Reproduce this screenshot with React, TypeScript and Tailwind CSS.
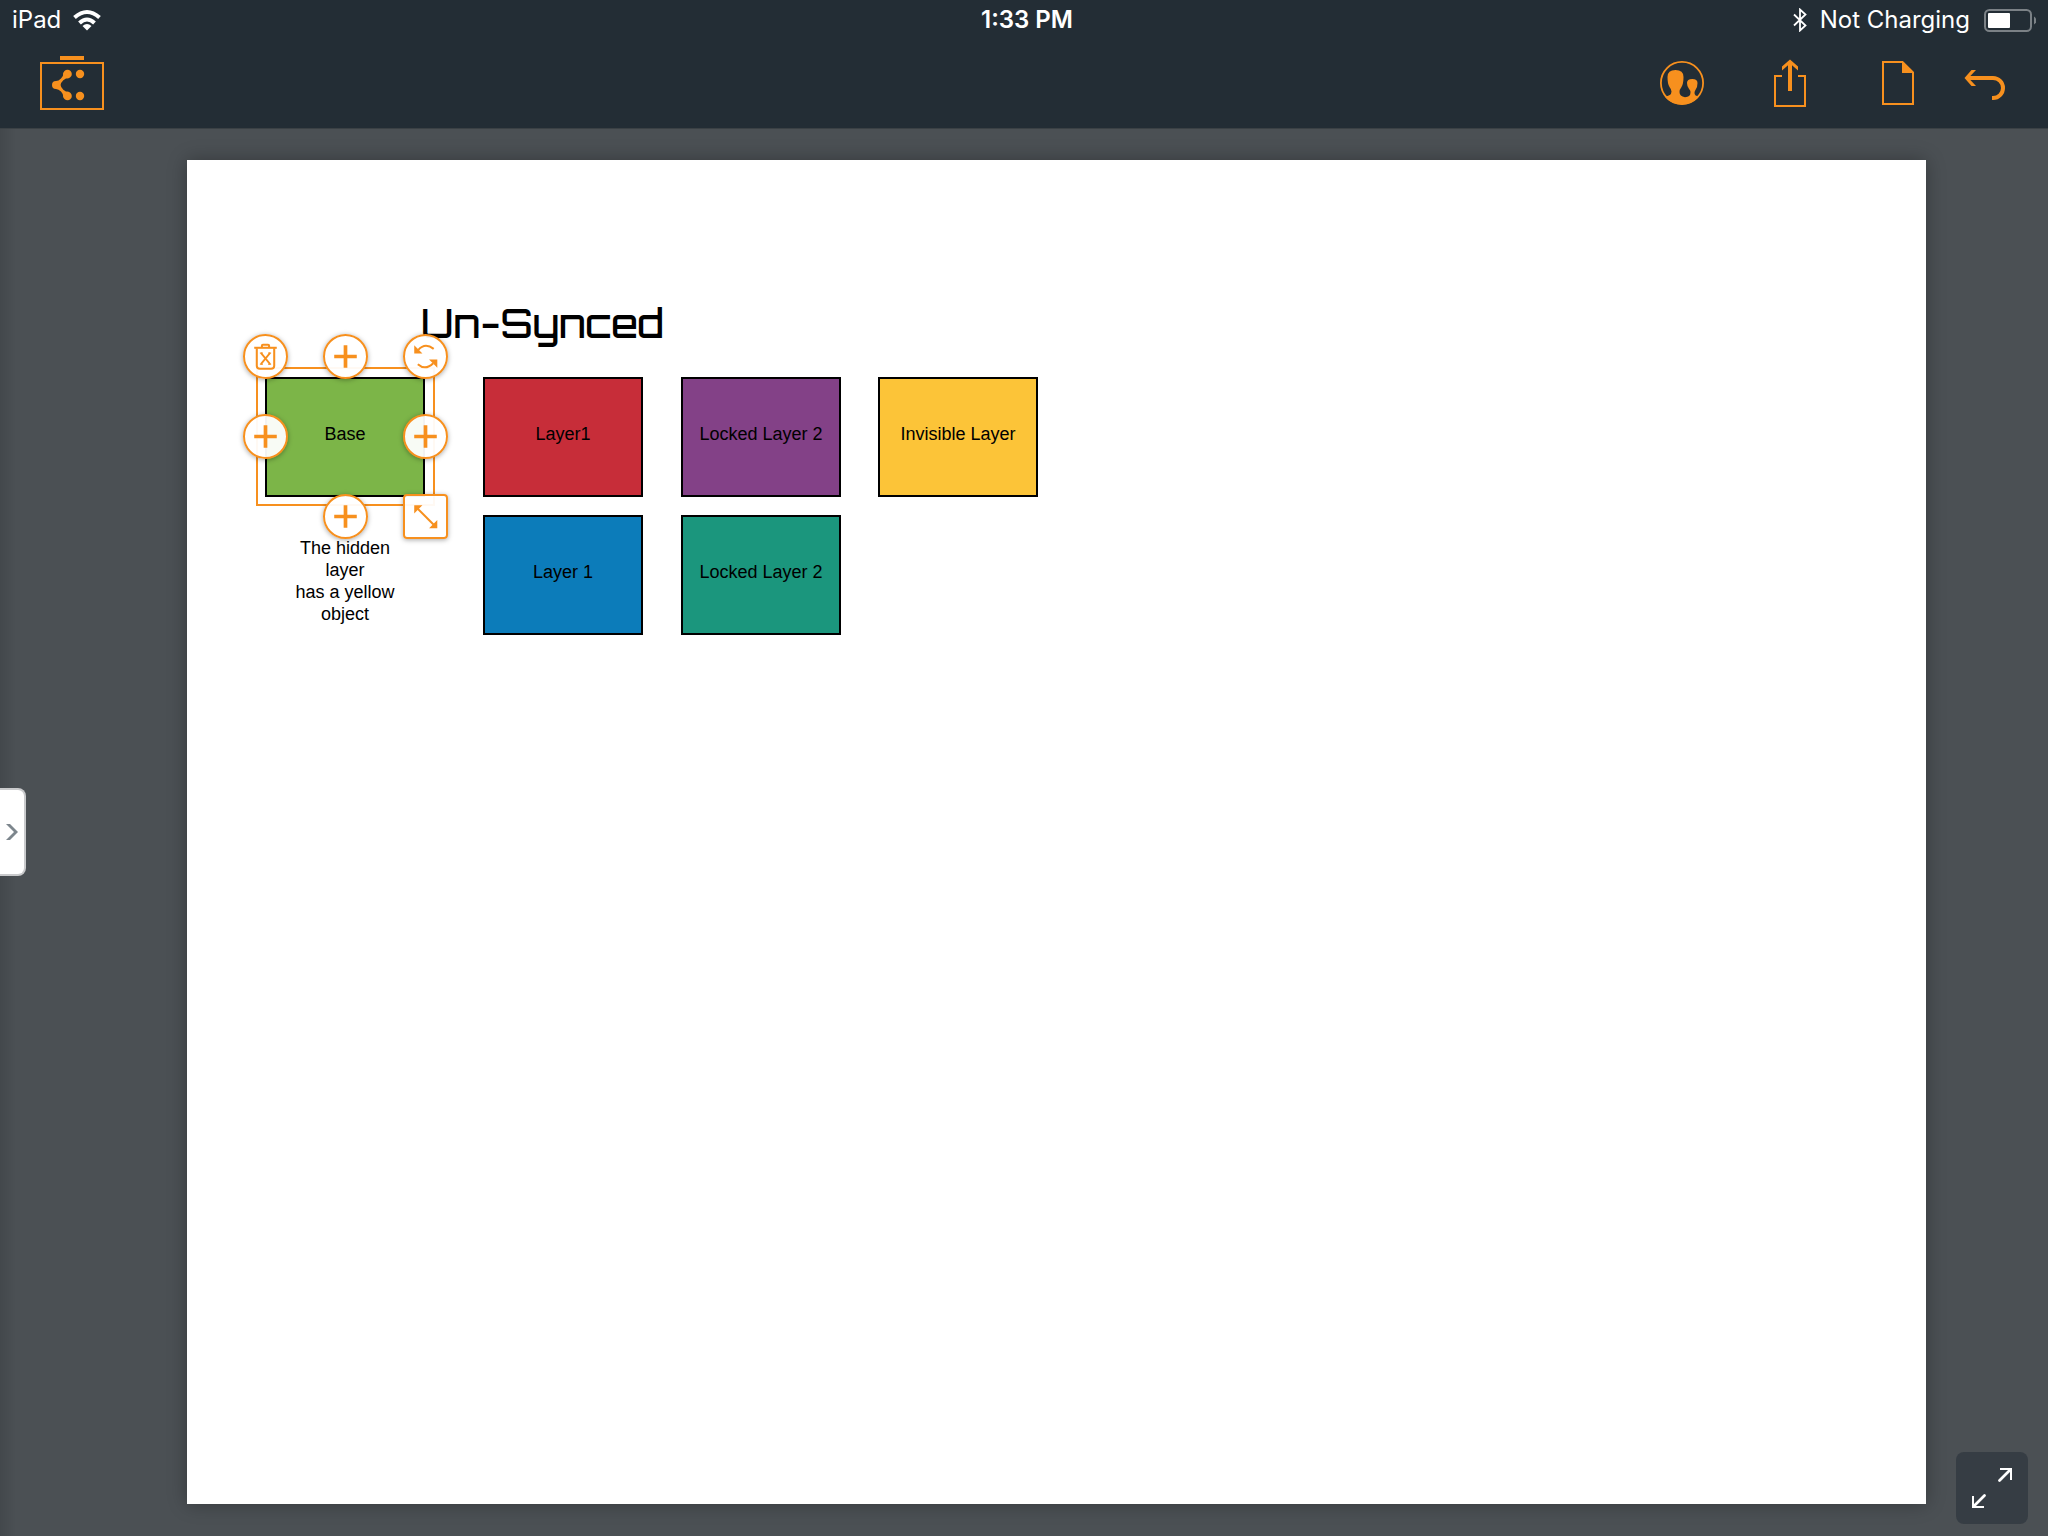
import type { ReactNode } from "react";

const shapes = [
  { label: "Base", place: "left-[78px] top-[217px] bg-[#7cb548]" },
  { label: "Layer1", place: "left-[296px] top-[217px] bg-[#c72d39]" },
  { label: "Locked Layer 2", place: "left-[494px] top-[217px] bg-[#834187]" },
  { label: "Invisible Layer", place: "left-[691px] top-[217px] bg-[#fcc438]" },
  { label: "Layer 1", place: "left-[296px] top-[355px] bg-[#0c7cba]" },
  { label: "Locked Layer 2", place: "left-[494px] top-[355px] bg-[#1b967d]" },
];

function Plus() {
  return (
    <svg className="size-full" viewBox="0 0 40 40" fill="#f7901e" aria-hidden="true">
      <path d="M18.200 9h3.600v9.200H31v3.600h-9.200V31h-3.600v-9.200H9v-3.600h9.200z" />
    </svg>
  );
}

function Trash() {
  return (
    <svg className="size-full" viewBox="0 0 40 40" fill="none" stroke="#f7901e" strokeWidth="2" aria-hidden="true">
      <path d="M9 11.500h22" />
      <path d="M16.500 11V9.500q0-1 1-1h5q1 0 1 1V11" />
      <path d="M11.500 12v17q0 3 3 3h11q3 0 3-3V12" />
      <path d="M15.500 16.500l9 11M24.500 16.500l-9 11" strokeWidth="1.800" />
      <path d="M14.500 16.500h3M22.500 16.500h3M14.500 27.500h3M22.500 27.500h3" strokeWidth="1" />
    </svg>
  );
}

function Rotate() {
  return (
    <svg className="size-full" viewBox="0 0 40 40" fill="none" aria-hidden="true">
      <path d="M13 13.500Q19.500 6 28 12.500" stroke="#f7901e" strokeWidth="2" />
      <path d="M12.500 27.500Q20 34 27.500 26.500" stroke="#f7901e" strokeWidth="2" />
      <path d="M9 9v8h8z" fill="#f7901e" />
      <path d="M31.500 31v-8h-8z" fill="#f7901e" />
    </svg>
  );
}

function Resize() {
  return (
    <svg className="size-full" viewBox="0 0 40 40" aria-hidden="true">
      <path d="M12 12l17 17" stroke="#f7901e" strokeWidth="2" />
      <path d="M9 9h8l-8 8zM31.500 31.500h-8l8-8z" fill="#f7901e" />
    </svg>
  );
}

function Handle({ label, place, children }: { label: string; place: string; children: ReactNode }) {
  return (
    <button
      type="button"
      aria-label={label}
      className={`absolute size-[45px] border-2 border-[#f7901e] bg-white/95 shadow-[0_1px_5px_rgba(0,0,0,0.35)] ${place}`}
    >
      {children}
    </button>
  );
}

function StatusBar() {
  return (
    <div className="grid h-10 grid-cols-3 items-center px-3 text-2xl leading-10 text-white">
      <div className="flex items-center gap-3">
        <span>iPad</span>
        <svg className="h-6 w-7" viewBox="0 0 28 24" fill="none" stroke="white" strokeWidth="4" aria-label="Wi-Fi">
          <path d="M1.500 9.500Q14-1.500 26.500 9.500" />
          <path d="M6.500 15Q14 8 21.500 15" />
          <path d="M9.500 18q4.500-4 9 0L14 22.500z" fill="white" stroke="none" />
        </svg>
      </div>
      <time className="justify-self-center pl-1.5 font-semibold">1:33 PM</time>
      <div className="flex items-center justify-self-end">
        <svg className="mr-3 h-6 w-4" viewBox="0 0 16 24" fill="none" stroke="white" strokeWidth="1.800" aria-label="Bluetooth">
          <path d="M2 6.500L13.500 17.500 8 22.500V1.500L13.500 6.500 2 17.500" />
        </svg>
        <span>Not Charging</span>
        <svg className="ml-3.5 h-6 w-[52px]" viewBox="0 0 52 24" aria-label="Battery">
          <rect x="1" y="2" width="46" height="21" rx="4.500" fill="none" stroke="#7b8186" strokeWidth="2" />
          <rect x="4" y="5" width="22" height="15" rx="1" fill="white" />
          <path d="M50 8.500q2.500 1.500 2.500 4t-2.500 4z" fill="#7b8186" />
        </svg>
      </div>
    </div>
  );
}

function Toolbar() {
  return (
    <nav className="flex h-[88px] items-start justify-between pt-4 pr-[42px] pl-10">
      <button type="button" aria-label="Documents">
        <svg className="h-14 w-16" viewBox="0 0 64 56" fill="#f7901e">
          <rect x="20" y="0" width="24" height="4" />
          <rect x="1" y="7" width="62" height="46" fill="none" stroke="#f7901e" strokeWidth="2" />
          <circle cx="27.500" cy="18" r="4.300" />
          <circle cx="40" cy="18" r="4.200" />
          <circle cx="27.500" cy="40" r="4.300" />
          <circle cx="40" cy="40" r="4.200" />
          <path d="M16 25q2.500 0 5-2.500 2.500-2.500 2.500-6l6 5.500q-4 0-6.200 2.300Q20.600 27 20.600 29t2.700 4.700q2.200 2.300 6.200 2.300l-6 5.500q0-3.500-2.500-6Q18.500 33 16 33a4 4 0 0 1 0-8z" />
        </svg>
      </button>
      <div className="flex">
        <button type="button" aria-label="Collaborators">
          <svg className="h-14 w-11" viewBox="0 0 44 56" fill="#f7901e">
            <circle cx="22" cy="27" r="21.100" fill="none" stroke="#f7901e" strokeWidth="1.800" />
            <path d="M4.500 40.500Q11.500 40 11.500 35.500 11.500 33.500 9.500 31 7.500 28 7.500 21 7.500 14 15.500 14 23.500 14 23.500 21 23.500 28 21.500 31 19.500 33.500 19.500 36 19.500 40.500 25 41.200 30.500 41 30.500 36.500 30.500 34.500 28.800 32.500 27 30 27 27 27 23 32.200 23 37.500 23 37.500 27 37.500 31 35.700 33.500 34.500 35 34.500 37 34.500 40 39 40.500 32 48.500 22 48.500 11 48.500 4.500 40.500z" />
          </svg>
        </button>
        <button type="button" aria-label="Share" className="ml-[70px]">
          <svg className="h-14 w-8" viewBox="0 0 32 56" fill="none" stroke="#f7901e">
            <path d="M8 20H1v30h30V20h-7" strokeWidth="2" />
            <path d="M16 35V6" strokeWidth="4" />
            <path d="M8 14.500v-4l8-7 8 7v4l-8-7z" fill="#f7901e" stroke="none" />
          </svg>
        </button>
        <button type="button" aria-label="Document" className="ml-[76px]">
          <svg className="h-14 w-8" viewBox="0 0 32 56" fill="none" stroke="#f7901e" strokeWidth="2">
            <path d="M1 6h19.500L31 16.500V48H1z" />
            <path d="M20 5l12 12H20z" fill="#f7901e" stroke="none" />
          </svg>
        </button>
        <button type="button" aria-label="Undo" className="ml-[50px]">
          <svg className="h-14 w-[42px]" viewBox="0 0 42 56" fill="none" stroke="#f7901e">
            <path d="M3 22h26a9.700 9.700 0 0 1 0 20h-1" strokeWidth="4" />
            <path d="M7.500 14H12l-7.500 8 7.500 8H7.500L.500 22z" fill="#f7901e" stroke="none" />
          </svg>
        </button>
      </div>
    </nav>
  );
}

export default function App() {
  return (
    <div className="flex min-h-screen flex-col bg-[#4b5054] font-['Inter',sans-serif]">
      <header className="bg-[#232d35]">
        <StatusBar />
        <Toolbar />
      </header>

      <main className="relative flex flex-1 bg-[linear-gradient(to_right,#43484c,#4b5054_16px)] py-8 pr-[122px] pl-[187px] shadow-[inset_0_1px_0_#3b4145]">
        <section
          aria-label="Canvas"
          className="relative flex-1 bg-white font-['Liberation_Sans',Arial,sans-serif] text-lg leading-[22px] text-black shadow-[0_0_18px_rgba(0,0,0,0.3)]"
        >
          <h1 className="absolute top-[135px] left-[234px] font-['Orbitron','DejaVu_Sans',sans-serif] text-[39px] leading-[56px] font-medium whitespace-nowrap">
            Un-Synced
          </h1>

          {shapes.map((shape) => (
            <div
              key={shape.place}
              className={`absolute flex h-[120px] w-40 items-center justify-center border-2 border-black pb-1.5 whitespace-nowrap ${shape.place}`}
            >
              {shape.label}
            </div>
          ))}

          <p className="absolute top-[377px] left-[108px] w-[100px] text-center">
            The hidden layer
            <br />
            has a yellow object
          </p>

          <div className="absolute top-[207px] left-[69px] h-[139px] w-[179px] border-2 border-[#f7901e]" />
          <Handle label="Delete" place="left-[56px] top-[174px] rounded-full"><Trash /></Handle>
          <Handle label="Add above" place="left-[136px] top-[174px] rounded-full"><Plus /></Handle>
          <Handle label="Rotate" place="left-[216px] top-[174px] rounded-full"><Rotate /></Handle>
          <Handle label="Add to the left" place="left-[56px] top-[254px] rounded-full"><Plus /></Handle>
          <Handle label="Add to the right" place="left-[216px] top-[254px] rounded-full"><Plus /></Handle>
          <Handle label="Add below" place="left-[136px] top-[334px] rounded-full"><Plus /></Handle>
          <Handle label="Resize" place="left-[216px] top-[334px] rounded-sm"><Resize /></Handle>
        </section>

        <button
          type="button"
          aria-label="Open side panel"
          className="absolute top-1/2 left-0 flex h-[88px] w-[26px] -translate-y-1/2 items-center justify-start rounded-r-lg border-y-2 border-r-2 border-[#c9cacc] bg-white pl-1.5"
        >
          <svg className="h-4 w-3" viewBox="0 0 12 16" fill="#7d868d" aria-hidden="true">
            <path d="M0 0h4l8 8-8 8H0l8-8z" />
          </svg>
        </button>

        <button
          type="button"
          aria-label="Full screen"
          className="absolute right-5 bottom-3 size-[72px] rounded-lg bg-[#363d44]"
        >
          <svg className="size-[72px]" viewBox="0 0 72 72" fill="none" stroke="white" strokeWidth="2" aria-hidden="true">
            <path d="M44 17h11v11M28 55H17V44" />
            <path d="M43.500 28.500L54 18M28.500 43.500L18 54" strokeWidth="2.800" strokeLinecap="round" />
          </svg>
        </button>
      </main>
    </div>
  );
}
